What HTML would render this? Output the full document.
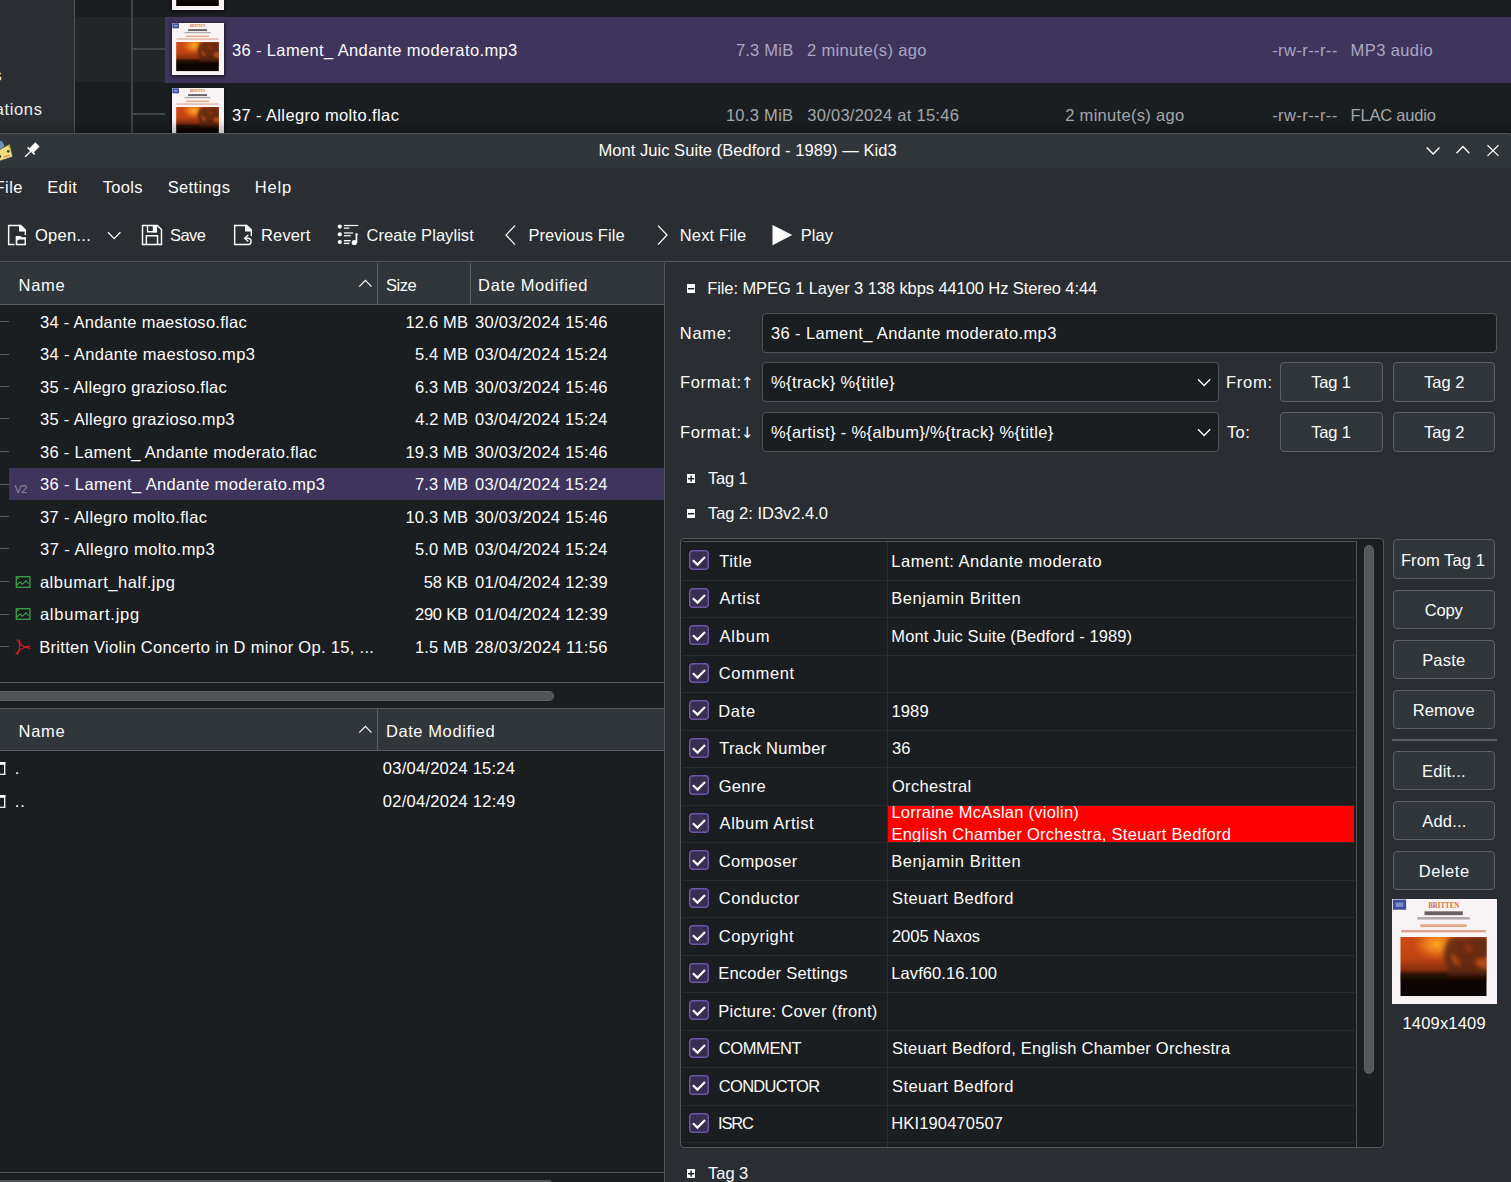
<!DOCTYPE html><html><head><meta charset="utf-8"><title>Kid3</title><style>
html,body{margin:0;padding:0;background:#2a2e32;overflow:hidden}
#r{position:relative;width:1511px;height:1182px;overflow:hidden;font-family:"Liberation Sans", sans-serif;font-size:16.5px;color:#fcfcfc}
#r div,#r svg,#r span{position:absolute;display:block}
#r span{white-space:pre;line-height:normal}
</style></head><body><div id="r">
<div style="left:0px;top:0px;width:1511px;height:133px;background:#1b1e20;"></div>
<div style="left:0px;top:0px;width:74px;height:133px;background:#2a2e32;"></div>
<div style="left:74px;top:0px;width:1px;height:133px;background:#54585b;"></div>
<div style="left:75px;top:17px;width:90px;height:65px;background:#232629;"></div>
<div style="left:165px;top:17px;width:1346px;height:65.9px;background:#3f345c;"></div>
<div style="left:131px;top:0px;width:1.5px;height:133px;background:#3f4448;"></div>
<div style="left:132px;top:48px;width:33px;height:1.5px;background:#3f4448;"></div>
<div style="left:132px;top:113px;width:33px;height:1.5px;background:#3f4448;"></div>
<svg style="left:0;top:0" width="0" height="0"><defs>
<linearGradient id="cg" x1="0" y1="0" x2="0" y2="1"><stop offset="0" stop-color="#cf4a14"/><stop offset=".35" stop-color="#c04413"/><stop offset=".55" stop-color="#8a2f0e"/><stop offset=".66" stop-color="#2a0f07"/><stop offset=".74" stop-color="#0f0604"/><stop offset="1" stop-color="#0b0504"/></linearGradient>
<radialGradient id="cr" cx=".42" cy=".12" r=".28"><stop offset="0" stop-color="#ffab24"/><stop offset=".5" stop-color="#ee7f1a" stop-opacity=".8"/><stop offset="1" stop-color="#e06a18" stop-opacity="0"/></radialGradient>
<filter id="cb" x="-20%" y="-20%" width="140%" height="140%"><feGaussianBlur stdDeviation="1.1"/></filter>
<clipPath id="cc"><rect x="4.1" y="18.8" width="42.8" height="29.3"/></clipPath>
</defs></svg>
<div style="left:172px;top:0px;width:52px;height:10px;background:#15171a;box-shadow:0 1px 3px 1px rgba(0,0,0,.55)"></div>
<svg style="left:172px;top:0px" width="52" height="10" viewBox="0 42.06 52 9.94" preserveAspectRatio="none"><rect width="52" height="52" fill="#f8f4f6"/>
<rect x=".4" y=".3" width="6.600" height="5" fill="#3b4c9b"/><rect x="1.800" y="1.700" width="3.800" height="2.200" fill="#7f8dc8"/>
<text x="25.600" y="4.300" font-family="Liberation Serif, serif" font-weight="bold" font-size="4.400" fill="#d4703c" text-anchor="middle" textLength="15.400" lengthAdjust="spacingAndGlyphs">BRITTEN</text>
<rect x="16.100" y="6.100" width="19" height="1.900" fill="#6b6164"/><rect x="12.500" y="8.900" width="26" height="1.300" fill="#b3aaad"/>
<rect x="14" y="12.500" width="23" height="1.400" fill="#e8a888"/><rect x="4.500" y="15.400" width="42" height="1.100" fill="#dfa08a"/>
<g clip-path="url(#cc)"><rect x="4.100" y="18.800" width="42.800" height="29.300" fill="url(#cg)"/><rect x="4.100" y="18.800" width="42.800" height="29.300" fill="url(#cr)"/>
<g filter="url(#cb)"><path d="M28 20 q4 -2 7 -.5 q7 -2 13 0 v10 q-3 -1 -5 1 q2 3 4 4 v4 h-20 q2 -3 0 -6 q-3 -5 1 -12.500z" fill="#55240f" opacity=".82"/><path d="M36 22 q3 1 4 4 q-3 0 -4 -4z" fill="#b8481a" opacity=".7"/>
<path d="M41 31 q3 -2 6 0 l0 3 q-3 1 -6 -3z" fill="#c24c18"/><path d="M29 27 q3 2 5 6 q-3 0 -5 -6z" fill="#d8621a" opacity=".8"/>
<rect x="4" y="37.500" width="43" height="2.500" fill="#1a0a06" opacity=".8"/></g></g></svg>
<div style="left:172px;top:22.8px;width:52px;height:52.3px;background:#15171a;box-shadow:0 1px 3px 1px rgba(0,0,0,.55)"></div>
<svg style="left:172px;top:22.8px" width="52" height="52.3" viewBox="0 0.00 52 52.00" preserveAspectRatio="none"><rect width="52" height="52" fill="#f8f4f6"/>
<rect x=".4" y=".3" width="6.600" height="5" fill="#3b4c9b"/><rect x="1.800" y="1.700" width="3.800" height="2.200" fill="#7f8dc8"/>
<text x="25.600" y="4.300" font-family="Liberation Serif, serif" font-weight="bold" font-size="4.400" fill="#d4703c" text-anchor="middle" textLength="15.400" lengthAdjust="spacingAndGlyphs">BRITTEN</text>
<rect x="16.100" y="6.100" width="19" height="1.900" fill="#6b6164"/><rect x="12.500" y="8.900" width="26" height="1.300" fill="#b3aaad"/>
<rect x="14" y="12.500" width="23" height="1.400" fill="#e8a888"/><rect x="4.500" y="15.400" width="42" height="1.100" fill="#dfa08a"/>
<g clip-path="url(#cc)"><rect x="4.100" y="18.800" width="42.800" height="29.300" fill="url(#cg)"/><rect x="4.100" y="18.800" width="42.800" height="29.300" fill="url(#cr)"/>
<g filter="url(#cb)"><path d="M28 20 q4 -2 7 -.5 q7 -2 13 0 v10 q-3 -1 -5 1 q2 3 4 4 v4 h-20 q2 -3 0 -6 q-3 -5 1 -12.500z" fill="#55240f" opacity=".82"/><path d="M36 22 q3 1 4 4 q-3 0 -4 -4z" fill="#b8481a" opacity=".7"/>
<path d="M41 31 q3 -2 6 0 l0 3 q-3 1 -6 -3z" fill="#c24c18"/><path d="M29 27 q3 2 5 6 q-3 0 -5 -6z" fill="#d8621a" opacity=".8"/>
<rect x="4" y="37.500" width="43" height="2.500" fill="#1a0a06" opacity=".8"/></g></g></svg>
<div style="left:172px;top:88.1px;width:52px;height:44.9px;background:#15171a;box-shadow:0 1px 3px 1px rgba(0,0,0,.55)"></div>
<svg style="left:172px;top:88.1px" width="52" height="44.9" viewBox="0 0.00 52 44.64" preserveAspectRatio="none"><rect width="52" height="52" fill="#f8f4f6"/>
<rect x=".4" y=".3" width="6.600" height="5" fill="#3b4c9b"/><rect x="1.800" y="1.700" width="3.800" height="2.200" fill="#7f8dc8"/>
<text x="25.600" y="4.300" font-family="Liberation Serif, serif" font-weight="bold" font-size="4.400" fill="#d4703c" text-anchor="middle" textLength="15.400" lengthAdjust="spacingAndGlyphs">BRITTEN</text>
<rect x="16.100" y="6.100" width="19" height="1.900" fill="#6b6164"/><rect x="12.500" y="8.900" width="26" height="1.300" fill="#b3aaad"/>
<rect x="14" y="12.500" width="23" height="1.400" fill="#e8a888"/><rect x="4.500" y="15.400" width="42" height="1.100" fill="#dfa08a"/>
<g clip-path="url(#cc)"><rect x="4.100" y="18.800" width="42.800" height="29.300" fill="url(#cg)"/><rect x="4.100" y="18.800" width="42.800" height="29.300" fill="url(#cr)"/>
<g filter="url(#cb)"><path d="M28 20 q4 -2 7 -.5 q7 -2 13 0 v10 q-3 -1 -5 1 q2 3 4 4 v4 h-20 q2 -3 0 -6 q-3 -5 1 -12.500z" fill="#55240f" opacity=".82"/><path d="M36 22 q3 1 4 4 q-3 0 -4 -4z" fill="#b8481a" opacity=".7"/>
<path d="M41 31 q3 -2 6 0 l0 3 q-3 1 -6 -3z" fill="#c24c18"/><path d="M29 27 q3 2 5 6 q-3 0 -5 -6z" fill="#d8621a" opacity=".8"/>
<rect x="4" y="37.500" width="43" height="2.500" fill="#1a0a06" opacity=".8"/></g></g></svg>
<div style="left:0px;top:133px;width:1511px;height:1049px;background:#2a2e32;"></div>
<div style="left:0px;top:119px;width:1511px;height:14px;background:linear-gradient(to bottom,rgba(0,0,0,0),rgba(0,0,0,.22));"></div>
<div style="left:0px;top:133px;width:1515px;height:34.6px;background:#31363b;border-top-right-radius:7px;border-top:1px solid #4f5459;box-sizing:border-box"></div>
<svg style="left:0;top:138px" width="16" height="26" viewBox="0 138 16 26">
<path d="M-4 152 q0 -11 5 -11 q2.600 0 3.600 7.500 l0 4z" fill="#6f93bd"/>
<path d="M-2 150.800 L9.700 143.900 L12.800 156.800 L-2 161.600z" fill="#eedd7c" stroke="#2a2f33" stroke-width=".6"/>
<path d="M5.500 146.500 l3.600 -1.600 l1 3.600" fill="none" stroke="#8a8a3c" stroke-width=".9"/>
<circle cx="8.300" cy="151.300" r="1.400" fill="#3c4a1e"/>
<path d="M3.500 157 l6 -1.600" stroke="#d9736a" stroke-width="1"/>
<circle cx="-0.500" cy="156.500" r="1.600" fill="#3a3a20"/>
</svg>
<svg style="left:23px;top:142.200px" width="17" height="17" viewBox="24 141 17 17">
<g transform="rotate(45 32 150)" fill="#fcfcfc"><rect x="29" y="140.8" width="6" height="8.4"/><rect x="27" y="149" width="10" height="1.6"/><rect x="31.3" y="150" width="1.4" height="8.2"/></g>
</svg>
<svg style="left:1420px;top:140px" width="85" height="22" viewBox="1420 140 85 22" fill="none" stroke="#fcfcfc" stroke-width="1.4">
<path d="M1426.7 147.4 l6.4 6.6 l6.4 -6.6"/><path d="M1456.5 153.2 l6.4 -6.6 l6.4 6.6"/><path d="M1487.500 145.300 l11 10.600 M1498.500 145.300 l-11 10.600" stroke-width="1.250"/></svg>
<svg style="left:0;top:220px" width="800" height="30" viewBox="0 220 800 30" fill="none" stroke="#fcfcfc" stroke-width="1.5">
<path d="M14.400 244.480 H8.650 V225.520 H20" stroke-width="1.450"/><path d="M19 224.800 H21 L26 229.500 V235 H24.600 V231.400 H19 Z" fill="#fcfcfc" stroke="none"/>
<path d="M15.700 236 H20.500 L22 237.300 H26 V245.200 H15.700 Z" fill="#fcfcfc" stroke="none"/><path d="M17.200 240.900 L19 239.500 H24.500 V243.700 H17.200 Z" fill="#2a2e32" stroke="none"/>
<path d="M108 232.300 l6.200 6.300 l6.200 -6.300" stroke-width="1.300"/>
<path d="M142.520 225.520 H157.400 L161.480 229.600 V244.480 H142.520 Z" stroke-width="1.450"/><path d="M147.500 225.500 V231.750 H156 V225.500" stroke-width="1.300"/><rect x="152.800" y="225.500" width="4.300" height="6.900" fill="#fcfcfc" stroke="none"/><path d="M146.350 244.500 V235.700 H157.550 V244.500" stroke-width="1.450"/>
<path d="M247 244.480 H234.650 V225.520 H246" stroke-width="1.450"/><path d="M245 224.800 H247 L252 229.500 V236 H250.600 V231.400 H245 Z" fill="#fcfcfc" stroke="none"/>
<path d="M248.300 235.100 L244.700 238.300 L248.300 241.500" stroke-width="1.400"/><path d="M244.800 238.300 H248.300 A3.150 3.150 0 0 1 248.300 244.550 H246.500" stroke-width="1.400"/>
<g stroke="none" fill="#fcfcfc"><circle cx="339.800" cy="226.600" r="2.100"/><circle cx="339.800" cy="234.300" r="2.100"/><circle cx="339.800" cy="242" r="2.100"/>
<rect x="343.900" y="224.900" width="14.300" height="1.200"/><rect x="343.900" y="227.300" width="5.400" height="1.700" opacity=".75"/>
<rect x="343.900" y="232.200" width="9.100" height="1.600" opacity=".78"/><rect x="343.900" y="235.100" width="6.800" height="1.200"/>
<rect x="343.900" y="240" width="6.800" height="1.100"/><rect x="343.900" y="241.200" width="6.100" height="1.500" opacity=".4"/><rect x="343.900" y="243" width="5.400" height="1.100"/>
<circle cx="354.300" cy="242.500" r="2.600"/><rect x="355.600" y="233.500" width="1.700" height="9.500"/><path d="M355.600 233.500 h1.400 l1.400 1.500 h-2.800z"/></g>
<path d="M515 225.6 L506 235 L515 244.6" stroke-width="1.3"/>
<path d="M658 225.6 L667 235 L658 244.6" stroke-width="1.3"/>
<path d="M772.5 225 L792.3 235 L772.5 245.2 Z" fill="#fcfcfc" stroke="none"/>
</svg>
<div style="left:0px;top:261px;width:1511px;height:1px;background:#565a5e;"></div>
<div style="left:0px;top:263px;width:664px;height:919px;background:#1b1e20;"></div>
<div style="left:664px;top:263px;width:1px;height:919px;background:#54585c;"></div>
<div style="left:0px;top:263px;width:664px;height:41px;background:#31363b;"></div>
<div style="left:0px;top:304px;width:664px;height:1px;background:#5b5f63;"></div>
<div style="left:377px;top:263px;width:1.2px;height:41px;background:#5a5e62;"></div>
<div style="left:470px;top:263px;width:1.2px;height:41px;background:#5a5e62;"></div>
<svg style="left:357px;top:276px" width="18" height="14" viewBox="357 276 18 14" fill="none" stroke="#fcfcfc" stroke-width="1.3"><path d="M359.3 286.6 l6.1 -6.2 l6.1 6.2"/></svg>
<div style="left:9px;top:467.7px;width:655px;height:32.8px;background:#3f345c;"></div>
<div style="left:0px;top:321px;width:9px;height:1.2px;background:#5a5e62;"></div>
<div style="left:0px;top:354px;width:9px;height:1.2px;background:#5a5e62;"></div>
<div style="left:0px;top:386px;width:9px;height:1.2px;background:#5a5e62;"></div>
<div style="left:0px;top:418px;width:9px;height:1.2px;background:#5a5e62;"></div>
<div style="left:0px;top:451px;width:9px;height:1.2px;background:#5a5e62;"></div>
<div style="left:0px;top:484px;width:9px;height:1.2px;background:#5a5e62;"></div>
<div style="left:0px;top:516px;width:9px;height:1.2px;background:#5a5e62;"></div>
<div style="left:0px;top:548px;width:9px;height:1.2px;background:#5a5e62;"></div>
<div style="left:0px;top:581px;width:9px;height:1.2px;background:#5a5e62;"></div>
<div style="left:0px;top:614px;width:9px;height:1.2px;background:#5a5e62;"></div>
<div style="left:0px;top:646px;width:9px;height:1.2px;background:#5a5e62;"></div>
<svg style="left:15px;top:575.3px" width="17" height="15" viewBox="15 575.3 17 15" fill="none" stroke="#3ca04a" stroke-width="1.3"><rect x="16.3" y="577.0" width="13.6" height="10.6"/><path d="M16.6 585.6999999999999 l3.4 -3.4 l2.4 2.2 l3.4 -3.4 l2.8 2.8" stroke-width="1.1"/><rect x="17.1" y="577.6999999999999" width="1.6" height="1.6" fill="#3ca04a" stroke="none"/></svg>
<svg style="left:15px;top:607.3px" width="17" height="15" viewBox="15 607.3 17 15" fill="none" stroke="#3ca04a" stroke-width="1.3"><rect x="16.3" y="609.0" width="13.6" height="10.6"/><path d="M16.6 617.6999999999999 l3.4 -3.4 l2.4 2.2 l3.4 -3.4 l2.8 2.8" stroke-width="1.1"/><rect x="17.1" y="609.6999999999999" width="1.6" height="1.6" fill="#3ca04a" stroke="none"/></svg>
<svg style="left:14px;top:637px" width="18" height="19" viewBox="14 637 18 19" fill="none" stroke="#e01b24" stroke-width="1.1" stroke-linecap="round"><path d="M19.600 643.700 L24.800 647.100 L19.200 650.400 Z"/><path d="M19.600 643.700 L17.200 639.600 M19.800 643.900 L19.800 639.800 M24.800 647.100 L30 646 M24.800 647.100 L30.200 648.300 M19.200 650.400 L16 653.800 M19.400 650.200 L17.600 654.200"/></svg>
<div style="left:0px;top:682px;width:664px;height:1px;background:#54585c;"></div>
<div style="left:0px;top:691px;width:554px;height:9.5px;background:#505457;border-radius:0 5px 5px 0;border:1px solid #5d6164;border-left:0;box-sizing:border-box"></div>
<div style="left:0px;top:708px;width:664px;height:1px;background:#54585c;"></div>
<div style="left:0px;top:709px;width:664px;height:41px;background:#31363b;"></div>
<div style="left:0px;top:750px;width:664px;height:1px;background:#5b5f63;"></div>
<div style="left:377px;top:709px;width:1.2px;height:41px;background:#5a5e62;"></div>
<svg style="left:357px;top:722px" width="18" height="14" viewBox="357 722 18 14" fill="none" stroke="#fcfcfc" stroke-width="1.3"><path d="M359.3 732.6 l6.1 -6.2 l6.1 6.2"/></svg>
<svg style="left:-0.400px;top:762.4px" width="7" height="14" viewBox="0 0 7 14" fill="#fcfcfc"><rect x="-1" y="0" width="6.300" height="2.800"/><rect x="4" y="0" width="1.300" height="12.900"/><rect x="-1" y="11.700" width="6.300" height="1.200"/></svg>
<svg style="left:-0.400px;top:795.4px" width="7" height="14" viewBox="0 0 7 14" fill="#fcfcfc"><rect x="-1" y="0" width="6.300" height="2.800"/><rect x="4" y="0" width="1.300" height="12.900"/><rect x="-1" y="11.700" width="6.300" height="1.200"/></svg>
<div style="left:0px;top:1172px;width:664px;height:1px;background:#54585c;"></div>
<div style="left:0px;top:1180px;width:552px;height:3px;background:#505457;border-top-right-radius:5px"></div>
<svg style="left:686.8px;top:283.9px" width="8.3" height="9.2" viewBox="0 0 8.3 9.2"><rect width="8.3" height="9.2" fill="#fcfcfc"/><rect x="1" y="4" width="6.2" height="1.4" fill="#15181a"/></svg>
<div style="left:762px;top:313px;width:734.5px;height:39.7px;background:#1b1e20;border:1px solid #505458;border-radius:4px;box-sizing:border-box"></div>
<div style="left:762px;top:362px;width:457px;height:39.7px;background:#1b1e20;border:1px solid #505458;border-radius:4px;box-sizing:border-box"></div>
<svg style="left:1195px;top:374px" width="18" height="16" viewBox="1195 374 18 16" fill="none" stroke="#fcfcfc" stroke-width="1.3"><path d="M1198 379.2 l6.1 6.3 l6.1 -6.3"/></svg>
<div style="left:1280.4px;top:362px;width:102.5px;height:39.7px;background:#31363b;border:1px solid #5c6064;border-radius:4px;box-sizing:border-box"></div>
<div style="left:1393px;top:362px;width:102px;height:39.7px;background:#31363b;border:1px solid #5c6064;border-radius:4px;box-sizing:border-box"></div>
<div style="left:762px;top:412px;width:457px;height:39.7px;background:#1b1e20;border:1px solid #505458;border-radius:4px;box-sizing:border-box"></div>
<svg style="left:1195px;top:424px" width="18" height="16" viewBox="1195 424 18 16" fill="none" stroke="#fcfcfc" stroke-width="1.3"><path d="M1198 429.2 l6.1 6.3 l6.1 -6.3"/></svg>
<div style="left:1280.4px;top:412px;width:102.5px;height:39.7px;background:#31363b;border:1px solid #5c6064;border-radius:4px;box-sizing:border-box"></div>
<div style="left:1393px;top:412px;width:102px;height:39.7px;background:#31363b;border:1px solid #5c6064;border-radius:4px;box-sizing:border-box"></div>
<svg style="left:686.8px;top:473.9px" width="8.3" height="9.2" viewBox="0 0 8.3 9.2"><rect width="8.3" height="9.2" fill="#fcfcfc"/><rect x="1" y="4" width="6.2" height="1.4" fill="#15181a"/><rect x="3.4" y="1.6" width="1.4" height="6.1" fill="#15181a"/></svg>
<svg style="left:686.8px;top:508.9px" width="8.3" height="9.2" viewBox="0 0 8.3 9.2"><rect width="8.3" height="9.2" fill="#fcfcfc"/><rect x="1" y="4" width="6.2" height="1.4" fill="#15181a"/></svg>
<svg style="left:686.8px;top:1168.9px" width="8.3" height="9.2" viewBox="0 0 8.3 9.2"><rect width="8.3" height="9.2" fill="#fcfcfc"/><rect x="1" y="4" width="6.2" height="1.4" fill="#15181a"/><rect x="3.4" y="1.6" width="1.4" height="6.1" fill="#15181a"/></svg>
<div style="left:680px;top:538px;width:704px;height:610px;background:#1b1e20;border:1px solid #54585c;border-radius:4px;box-sizing:border-box"></div>
<div style="left:683px;top:541px;width:673.5px;height:1px;background:#4f5357;"></div>
<div style="left:1356px;top:541px;width:1px;height:606px;background:#4f5357;"></div>
<div style="left:1364px;top:544.5px;width:9.8px;height:529.5px;background:#53575a;border-radius:5px;border:1px solid #5f6366;box-sizing:border-box"></div>
<div style="left:887px;top:542px;width:1px;height:605px;background:#2c2f32;"></div>
<div style="left:682px;top:580px;width:672.5px;height:1px;background:#292c2f;"></div>
<svg style="left:689px;top:550.4px" width="20" height="20" viewBox="0 0 20 20"><rect x=".7" y=".7" width="18.6" height="18.6" rx="3" fill="#372e50" stroke="#6d54a6" stroke-width="1.5"/><path d="M3.9 10.2 L8.5 14.6 L16 7" fill="none" stroke="#fcfcfc" stroke-width="2.2"/></svg>
<div style="left:682px;top:617px;width:672.5px;height:1px;background:#292c2f;"></div>
<svg style="left:689px;top:587.9px" width="20" height="20" viewBox="0 0 20 20"><rect x=".7" y=".7" width="18.6" height="18.6" rx="3" fill="#372e50" stroke="#6d54a6" stroke-width="1.5"/><path d="M3.9 10.2 L8.5 14.6 L16 7" fill="none" stroke="#fcfcfc" stroke-width="2.2"/></svg>
<div style="left:682px;top:655px;width:672.5px;height:1px;background:#292c2f;"></div>
<svg style="left:689px;top:625.4px" width="20" height="20" viewBox="0 0 20 20"><rect x=".7" y=".7" width="18.6" height="18.6" rx="3" fill="#372e50" stroke="#6d54a6" stroke-width="1.5"/><path d="M3.9 10.2 L8.5 14.6 L16 7" fill="none" stroke="#fcfcfc" stroke-width="2.2"/></svg>
<div style="left:682px;top:692px;width:672.5px;height:1px;background:#292c2f;"></div>
<svg style="left:689px;top:662.9px" width="20" height="20" viewBox="0 0 20 20"><rect x=".7" y=".7" width="18.6" height="18.6" rx="3" fill="#372e50" stroke="#6d54a6" stroke-width="1.5"/><path d="M3.9 10.2 L8.5 14.6 L16 7" fill="none" stroke="#fcfcfc" stroke-width="2.2"/></svg>
<div style="left:682px;top:730px;width:672.5px;height:1px;background:#292c2f;"></div>
<svg style="left:689px;top:700.4px" width="20" height="20" viewBox="0 0 20 20"><rect x=".7" y=".7" width="18.6" height="18.6" rx="3" fill="#372e50" stroke="#6d54a6" stroke-width="1.5"/><path d="M3.9 10.2 L8.5 14.6 L16 7" fill="none" stroke="#fcfcfc" stroke-width="2.2"/></svg>
<div style="left:682px;top:767px;width:672.5px;height:1px;background:#292c2f;"></div>
<svg style="left:689px;top:737.9px" width="20" height="20" viewBox="0 0 20 20"><rect x=".7" y=".7" width="18.6" height="18.6" rx="3" fill="#372e50" stroke="#6d54a6" stroke-width="1.5"/><path d="M3.9 10.2 L8.5 14.6 L16 7" fill="none" stroke="#fcfcfc" stroke-width="2.2"/></svg>
<div style="left:682px;top:805px;width:672.5px;height:1px;background:#292c2f;"></div>
<svg style="left:689px;top:775.4px" width="20" height="20" viewBox="0 0 20 20"><rect x=".7" y=".7" width="18.6" height="18.6" rx="3" fill="#372e50" stroke="#6d54a6" stroke-width="1.5"/><path d="M3.9 10.2 L8.5 14.6 L16 7" fill="none" stroke="#fcfcfc" stroke-width="2.2"/></svg>
<div style="left:682px;top:842px;width:672.5px;height:1px;background:#292c2f;"></div>
<svg style="left:689px;top:812.9px" width="20" height="20" viewBox="0 0 20 20"><rect x=".7" y=".7" width="18.6" height="18.6" rx="3" fill="#372e50" stroke="#6d54a6" stroke-width="1.5"/><path d="M3.9 10.2 L8.5 14.6 L16 7" fill="none" stroke="#fcfcfc" stroke-width="2.2"/></svg>
<div style="left:682px;top:880px;width:672.5px;height:1px;background:#292c2f;"></div>
<svg style="left:689px;top:850.4px" width="20" height="20" viewBox="0 0 20 20"><rect x=".7" y=".7" width="18.6" height="18.6" rx="3" fill="#372e50" stroke="#6d54a6" stroke-width="1.5"/><path d="M3.9 10.2 L8.5 14.6 L16 7" fill="none" stroke="#fcfcfc" stroke-width="2.2"/></svg>
<div style="left:682px;top:917px;width:672.5px;height:1px;background:#292c2f;"></div>
<svg style="left:689px;top:887.9px" width="20" height="20" viewBox="0 0 20 20"><rect x=".7" y=".7" width="18.6" height="18.6" rx="3" fill="#372e50" stroke="#6d54a6" stroke-width="1.5"/><path d="M3.9 10.2 L8.5 14.6 L16 7" fill="none" stroke="#fcfcfc" stroke-width="2.2"/></svg>
<div style="left:682px;top:955px;width:672.5px;height:1px;background:#292c2f;"></div>
<svg style="left:689px;top:925.4px" width="20" height="20" viewBox="0 0 20 20"><rect x=".7" y=".7" width="18.6" height="18.6" rx="3" fill="#372e50" stroke="#6d54a6" stroke-width="1.5"/><path d="M3.9 10.2 L8.5 14.6 L16 7" fill="none" stroke="#fcfcfc" stroke-width="2.2"/></svg>
<div style="left:682px;top:992px;width:672.5px;height:1px;background:#292c2f;"></div>
<svg style="left:689px;top:962.9px" width="20" height="20" viewBox="0 0 20 20"><rect x=".7" y=".7" width="18.6" height="18.6" rx="3" fill="#372e50" stroke="#6d54a6" stroke-width="1.5"/><path d="M3.9 10.2 L8.5 14.6 L16 7" fill="none" stroke="#fcfcfc" stroke-width="2.2"/></svg>
<div style="left:682px;top:1030px;width:672.5px;height:1px;background:#292c2f;"></div>
<svg style="left:689px;top:1000.4px" width="20" height="20" viewBox="0 0 20 20"><rect x=".7" y=".7" width="18.6" height="18.6" rx="3" fill="#372e50" stroke="#6d54a6" stroke-width="1.5"/><path d="M3.9 10.2 L8.5 14.6 L16 7" fill="none" stroke="#fcfcfc" stroke-width="2.2"/></svg>
<div style="left:682px;top:1067px;width:672.5px;height:1px;background:#292c2f;"></div>
<svg style="left:689px;top:1037.9px" width="20" height="20" viewBox="0 0 20 20"><rect x=".7" y=".7" width="18.6" height="18.6" rx="3" fill="#372e50" stroke="#6d54a6" stroke-width="1.5"/><path d="M3.9 10.2 L8.5 14.6 L16 7" fill="none" stroke="#fcfcfc" stroke-width="2.2"/></svg>
<div style="left:682px;top:1105px;width:672.5px;height:1px;background:#292c2f;"></div>
<svg style="left:689px;top:1075.4px" width="20" height="20" viewBox="0 0 20 20"><rect x=".7" y=".7" width="18.6" height="18.6" rx="3" fill="#372e50" stroke="#6d54a6" stroke-width="1.5"/><path d="M3.9 10.2 L8.5 14.6 L16 7" fill="none" stroke="#fcfcfc" stroke-width="2.2"/></svg>
<div style="left:682px;top:1142px;width:672.5px;height:1px;background:#292c2f;"></div>
<svg style="left:689px;top:1112.9px" width="20" height="20" viewBox="0 0 20 20"><rect x=".7" y=".7" width="18.6" height="18.6" rx="3" fill="#372e50" stroke="#6d54a6" stroke-width="1.5"/><path d="M3.9 10.2 L8.5 14.6 L16 7" fill="none" stroke="#fcfcfc" stroke-width="2.2"/></svg>
<div style="left:888px;top:806px;width:466.3px;height:36px;background:#ff0000;"></div>
<div style="left:888px;top:842px;width:466.3px;height:3px;background:#1b1e20;z-index:2"></div>
<div style="left:888px;top:842px;width:466.3px;height:1px;background:#292c2f;z-index:3"></div>
<div style="left:1393px;top:539.4px;width:102.2px;height:39.6px;background:#31363b;border:1px solid #5c6064;border-radius:4px;box-sizing:border-box"></div>
<div style="left:1393px;top:589.5px;width:102.2px;height:39.6px;background:#31363b;border:1px solid #5c6064;border-radius:4px;box-sizing:border-box"></div>
<div style="left:1393px;top:639.6px;width:102.2px;height:39.6px;background:#31363b;border:1px solid #5c6064;border-radius:4px;box-sizing:border-box"></div>
<div style="left:1393px;top:689.8px;width:102.2px;height:39.6px;background:#31363b;border:1px solid #5c6064;border-radius:4px;box-sizing:border-box"></div>
<div style="left:1393px;top:750.8px;width:102.2px;height:39.6px;background:#31363b;border:1px solid #5c6064;border-radius:4px;box-sizing:border-box"></div>
<div style="left:1393px;top:800.8px;width:102.2px;height:39.6px;background:#31363b;border:1px solid #5c6064;border-radius:4px;box-sizing:border-box"></div>
<div style="left:1393px;top:850.8px;width:102.2px;height:39.6px;background:#31363b;border:1px solid #5c6064;border-radius:4px;box-sizing:border-box"></div>
<div style="left:1392px;top:739.3px;width:105px;height:1.5px;background:#5c6064;"></div>
<svg style="left:1392px;top:899px" width="105" height="105" viewBox="0 0 52 52"><rect width="52" height="52" fill="#f8f4f6"/>
<rect x=".4" y=".3" width="6.600" height="5" fill="#3b4c9b"/><rect x="1.800" y="1.700" width="3.800" height="2.200" fill="#7f8dc8"/>
<text x="25.600" y="4.300" font-family="Liberation Serif, serif" font-weight="bold" font-size="4.400" fill="#d4703c" text-anchor="middle" textLength="15.400" lengthAdjust="spacingAndGlyphs">BRITTEN</text>
<rect x="16.100" y="6.100" width="19" height="1.900" fill="#6b6164"/><rect x="12.500" y="8.900" width="26" height="1.300" fill="#b3aaad"/>
<rect x="14" y="12.500" width="23" height="1.400" fill="#e8a888"/><rect x="4.500" y="15.400" width="42" height="1.100" fill="#dfa08a"/>
<g clip-path="url(#cc)"><rect x="4.100" y="18.800" width="42.800" height="29.300" fill="url(#cg)"/><rect x="4.100" y="18.800" width="42.800" height="29.300" fill="url(#cr)"/>
<g filter="url(#cb)"><path d="M28 20 q4 -2 7 -.5 q7 -2 13 0 v10 q-3 -1 -5 1 q2 3 4 4 v4 h-20 q2 -3 0 -6 q-3 -5 1 -12.500z" fill="#55240f" opacity=".82"/><path d="M36 22 q3 1 4 4 q-3 0 -4 -4z" fill="#b8481a" opacity=".7"/>
<path d="M41 31 q3 -2 6 0 l0 3 q-3 1 -6 -3z" fill="#c24c18"/><path d="M29 27 q3 2 5 6 q-3 0 -5 -6z" fill="#d8621a" opacity=".8"/>
<rect x="4" y="37.500" width="43" height="2.500" fill="#1a0a06" opacity=".8"/></g></g></svg>
<span style="left:-6.5px;top:66.4px;letter-spacing:0.000px;color:#eceded;">s</span>
<span style="left:-5.2px;top:100.2px;letter-spacing:0.613px;color:#eceded;">ations</span>
<span style="left:231.9px;top:41.2px;letter-spacing:0.375px;">36 - Lament_ Andante moderato.mp3</span>
<span style="left:735.9px;top:41.2px;letter-spacing:0.230px;color:#aaa7c4;">7.3 MiB</span>
<span style="left:807.0px;top:41.2px;letter-spacing:0.342px;color:#aaa7c4;">2 minute(s) ago</span>
<span style="left:1272.2px;top:41.2px;letter-spacing:0.410px;color:#aaa7c4;">-rw-r--r--</span>
<span style="left:1350.6px;top:41.2px;letter-spacing:0.394px;color:#aaa7c4;">MP3 audio</span>
<span style="left:231.9px;top:105.7px;letter-spacing:0.381px;">37 - Allegro molto.flac</span>
<span style="left:725.9px;top:105.7px;letter-spacing:0.300px;color:#a4a7aa;">10.3 MiB</span>
<span style="left:807.2px;top:105.7px;letter-spacing:0.269px;color:#a4a7aa;">30/03/2024 at 15:46</span>
<span style="left:1065.2px;top:105.7px;letter-spacing:0.313px;color:#a4a7aa;">2 minute(s) ago</span>
<span style="left:1272.2px;top:105.7px;letter-spacing:0.410px;color:#a4a7aa;">-rw-r--r--</span>
<span style="left:1350.6px;top:105.7px;letter-spacing:-0.199px;color:#a4a7aa;">FLAC audio</span>
<span style="left:598.4px;top:141.0px;letter-spacing:0.054px;">Mont Juic Suite (Bedford - 1989) — Kid3</span>
<span style="left:-5.4px;top:178.0px;letter-spacing:0.431px;">File</span>
<span style="left:47.2px;top:178.0px;letter-spacing:0.412px;">Edit</span>
<span style="left:102.8px;top:178.0px;letter-spacing:0.309px;">Tools</span>
<span style="left:167.7px;top:178.0px;letter-spacing:0.374px;">Settings</span>
<span style="left:254.7px;top:178.0px;letter-spacing:0.836px;">Help</span>
<span style="left:34.9px;top:226.0px;letter-spacing:0.294px;">Open...</span>
<span style="left:170.0px;top:226.0px;letter-spacing:-0.576px;">Save</span>
<span style="left:261.1px;top:226.0px;letter-spacing:0.113px;">Revert</span>
<span style="left:366.6px;top:226.0px;letter-spacing:0.056px;">Create Playlist</span>
<span style="left:528.4px;top:226.0px;letter-spacing:0.068px;">Previous File</span>
<span style="left:679.7px;top:226.0px;letter-spacing:0.185px;">Next File</span>
<span style="left:800.8px;top:226.0px;letter-spacing:0.025px;">Play</span>
<span style="left:18.5px;top:276.0px;letter-spacing:0.757px;">Name</span>
<span style="left:386.1px;top:276.0px;letter-spacing:-0.476px;">Size</span>
<span style="left:478.1px;top:276.0px;letter-spacing:0.625px;">Date Modified</span>
<span style="left:40.0px;top:313.0px;letter-spacing:0.268px;">34 - Andante maestoso.flac</span>
<span style="left:405.4px;top:313.0px;letter-spacing:0.196px;">12.6 MB</span>
<span style="left:475.0px;top:313.0px;letter-spacing:0.272px;">30/03/2024 15:46</span>
<span style="left:40.0px;top:345.0px;letter-spacing:0.353px;">34 - Andante maestoso.mp3</span>
<span style="left:415.0px;top:345.0px;letter-spacing:0.150px;">5.4 MB</span>
<span style="left:475.0px;top:345.0px;letter-spacing:0.257px;">03/04/2024 15:24</span>
<span style="left:40.0px;top:378.0px;letter-spacing:0.243px;">35 - Allegro grazioso.flac</span>
<span style="left:414.9px;top:378.0px;letter-spacing:0.185px;">6.3 MB</span>
<span style="left:475.0px;top:378.0px;letter-spacing:0.272px;">30/03/2024 15:46</span>
<span style="left:40.0px;top:410.0px;letter-spacing:0.310px;">35 - Allegro grazioso.mp3</span>
<span style="left:415.3px;top:410.0px;letter-spacing:0.094px;">4.2 MB</span>
<span style="left:475.0px;top:410.0px;letter-spacing:0.257px;">03/04/2024 15:24</span>
<span style="left:40.0px;top:443.0px;letter-spacing:0.298px;">36 - Lament_ Andante moderato.flac</span>
<span style="left:405.4px;top:443.0px;letter-spacing:0.196px;">19.3 MB</span>
<span style="left:475.0px;top:443.0px;letter-spacing:0.272px;">30/03/2024 15:46</span>
<span style="left:40.0px;top:475.0px;letter-spacing:0.365px;">36 - Lament_ Andante moderato.mp3</span>
<span style="left:414.9px;top:475.0px;letter-spacing:0.187px;">7.3 MB</span>
<span style="left:475.0px;top:475.0px;letter-spacing:0.257px;">03/04/2024 15:24</span>
<span style="left:40.0px;top:508.0px;letter-spacing:0.377px;">37 - Allegro molto.flac</span>
<span style="left:405.4px;top:508.0px;letter-spacing:0.196px;">10.3 MB</span>
<span style="left:475.0px;top:508.0px;letter-spacing:0.272px;">30/03/2024 15:46</span>
<span style="left:40.0px;top:540.0px;letter-spacing:0.455px;">37 - Allegro molto.mp3</span>
<span style="left:415.0px;top:540.0px;letter-spacing:0.150px;">5.0 MB</span>
<span style="left:475.0px;top:540.0px;letter-spacing:0.257px;">03/04/2024 15:24</span>
<span style="left:39.9px;top:573.0px;letter-spacing:0.530px;">albumart_half.jpg</span>
<span style="left:423.7px;top:573.0px;letter-spacing:-0.156px;">58 KB</span>
<span style="left:475.0px;top:573.0px;letter-spacing:0.277px;">01/04/2024 12:39</span>
<span style="left:39.9px;top:605.0px;letter-spacing:0.777px;">albumart.jpg</span>
<span style="left:414.9px;top:605.0px;letter-spacing:-0.185px;">290 KB</span>
<span style="left:475.0px;top:605.0px;letter-spacing:0.277px;">01/04/2024 12:39</span>
<span style="left:39.2px;top:638.0px;letter-spacing:0.313px;">Britten Violin Concerto in D minor Op. 15, ...</span>
<span style="left:415.0px;top:638.0px;letter-spacing:0.149px;">1.5 MB</span>
<span style="left:474.8px;top:638.0px;letter-spacing:0.368px;">28/03/2024 11:56</span>
<span style="left:14.5px;top:483.2px;letter-spacing:-0.500px;color:#8f8aa8;font-size:11px;">V2</span>
<span style="left:18.5px;top:722.0px;letter-spacing:0.757px;">Name</span>
<span style="left:385.9px;top:722.0px;letter-spacing:0.592px;">Date Modified</span>
<span style="left:14.7px;top:759.0px;letter-spacing:0.000px;">.</span>
<span style="left:14.7px;top:792.0px;letter-spacing:1.000px;">..</span>
<span style="left:382.8px;top:759.0px;letter-spacing:0.244px;">03/04/2024 15:24</span>
<span style="left:382.8px;top:792.0px;letter-spacing:0.264px;">02/04/2024 12:49</span>
<span style="left:707.2px;top:279.0px;letter-spacing:-0.089px;">File: MPEG 1 Layer 3 138 kbps 44100 Hz Stereo 4:44</span>
<span style="left:679.8px;top:324.0px;letter-spacing:0.713px;">Name:</span>
<span style="left:771.0px;top:324.0px;letter-spacing:0.375px;">36 - Lament_ Andante moderato.mp3</span>
<span style="left:679.9px;top:373.0px;letter-spacing:0.719px;">Format:</span>
<span style="left:740.8px;top:374.0px;letter-spacing:0.000px;font-size:15.5px;font-family:'DejaVu Sans',sans-serif;">↑</span>
<span style="left:771.0px;top:373.0px;letter-spacing:0.386px;">%{track} %{title}</span>
<span style="left:1225.9px;top:373.0px;letter-spacing:0.767px;">From:</span>
<span style="left:1311.2px;top:373.0px;letter-spacing:-0.125px;">Tag 1</span>
<span style="left:1423.9px;top:373.0px;letter-spacing:0.056px;">Tag 2</span>
<span style="left:679.9px;top:423.0px;letter-spacing:0.719px;">Format:</span>
<span style="left:740.8px;top:424.0px;letter-spacing:0.000px;font-size:15.5px;font-family:'DejaVu Sans',sans-serif;">↓</span>
<span style="left:771.0px;top:423.0px;letter-spacing:0.369px;">%{artist} - %{album}/%{track} %{title}</span>
<span style="left:1226.9px;top:423.0px;letter-spacing:0.431px;">To:</span>
<span style="left:1311.2px;top:423.0px;letter-spacing:-0.125px;">Tag 1</span>
<span style="left:1423.9px;top:423.0px;letter-spacing:0.056px;">Tag 2</span>
<span style="left:707.9px;top:469.0px;letter-spacing:-0.175px;">Tag 1</span>
<span style="left:707.9px;top:504.0px;letter-spacing:-0.004px;">Tag 2: ID3v2.4.0</span>
<span style="left:708.1px;top:1164.0px;letter-spacing:-0.045px;">Tag 3</span>
<span style="left:719.2px;top:552.0px;letter-spacing:0.510px;">Title</span>
<span style="left:891.3px;top:552.0px;letter-spacing:0.491px;">Lament: Andante moderato</span>
<span style="left:719.6px;top:589.0px;letter-spacing:0.512px;">Artist</span>
<span style="left:891.3px;top:589.0px;letter-spacing:0.551px;">Benjamin Britten</span>
<span style="left:719.6px;top:627.0px;letter-spacing:0.760px;">Album</span>
<span style="left:891.3px;top:627.0px;letter-spacing:0.104px;">Mont Juic Suite (Bedford - 1989)</span>
<span style="left:718.8px;top:664.0px;letter-spacing:0.638px;">Comment</span>
<span style="left:718.2px;top:702.0px;letter-spacing:0.742px;">Date</span>
<span style="left:891.4px;top:702.0px;letter-spacing:0.173px;">1989</span>
<span style="left:719.2px;top:739.0px;letter-spacing:0.284px;">Track Number</span>
<span style="left:892.1px;top:739.0px;letter-spacing:-0.106px;">36</span>
<span style="left:718.8px;top:777.0px;letter-spacing:0.226px;">Genre</span>
<span style="left:891.9px;top:777.0px;letter-spacing:0.353px;">Orchestral</span>
<span style="left:719.6px;top:814.0px;letter-spacing:0.547px;">Album Artist</span>
<span style="left:718.8px;top:852.0px;letter-spacing:0.327px;">Composer</span>
<span style="left:891.3px;top:852.0px;letter-spacing:0.551px;">Benjamin Britten</span>
<span style="left:718.8px;top:889.0px;letter-spacing:0.534px;">Conductor</span>
<span style="left:892.0px;top:889.0px;letter-spacing:0.424px;">Steuart Bedford</span>
<span style="left:718.8px;top:927.0px;letter-spacing:0.517px;">Copyright</span>
<span style="left:891.9px;top:927.0px;letter-spacing:0.018px;">2005 Naxos</span>
<span style="left:718.2px;top:964.0px;letter-spacing:0.245px;">Encoder Settings</span>
<span style="left:891.3px;top:964.0px;letter-spacing:0.084px;">Lavf60.16.100</span>
<span style="left:718.2px;top:1002.0px;letter-spacing:0.288px;">Picture: Cover (front)</span>
<span style="left:718.8px;top:1039.0px;letter-spacing:-0.406px;">COMMENT</span>
<span style="left:892.0px;top:1039.0px;letter-spacing:0.242px;">Steuart Bedford, English Chamber Orchestra</span>
<span style="left:718.8px;top:1077.0px;letter-spacing:-0.706px;">CONDUCTOR</span>
<span style="left:892.0px;top:1077.0px;letter-spacing:0.424px;">Steuart Bedford</span>
<span style="left:718.1px;top:1114.0px;letter-spacing:-1.224px;">ISRC</span>
<span style="left:891.3px;top:1114.0px;letter-spacing:0.143px;">HKI190470507</span>
<span style="left:891.4px;top:802.6px;letter-spacing:0.246px;">Lorraine McAslan (violin)</span>
<span style="left:891.4px;top:824.7px;letter-spacing:0.275px;">English Chamber Orchestra, Steuart Bedford</span>
<span style="left:1400.9px;top:551.0px;letter-spacing:0.089px;">From Tag 1</span>
<span style="left:1424.7px;top:601.0px;letter-spacing:-0.154px;">Copy</span>
<span style="left:1422.2px;top:651.0px;letter-spacing:0.171px;">Paste</span>
<span style="left:1412.7px;top:701.0px;letter-spacing:0.087px;">Remove</span>
<span style="left:1422.0px;top:762.0px;letter-spacing:0.229px;">Edit...</span>
<span style="left:1422.2px;top:812.0px;letter-spacing:0.223px;">Add...</span>
<span style="left:1418.8px;top:862.0px;letter-spacing:0.517px;">Delete</span>
<span style="left:1402.4px;top:1013.7px;letter-spacing:0.196px;">1409x1409</span>
</div></body></html>
